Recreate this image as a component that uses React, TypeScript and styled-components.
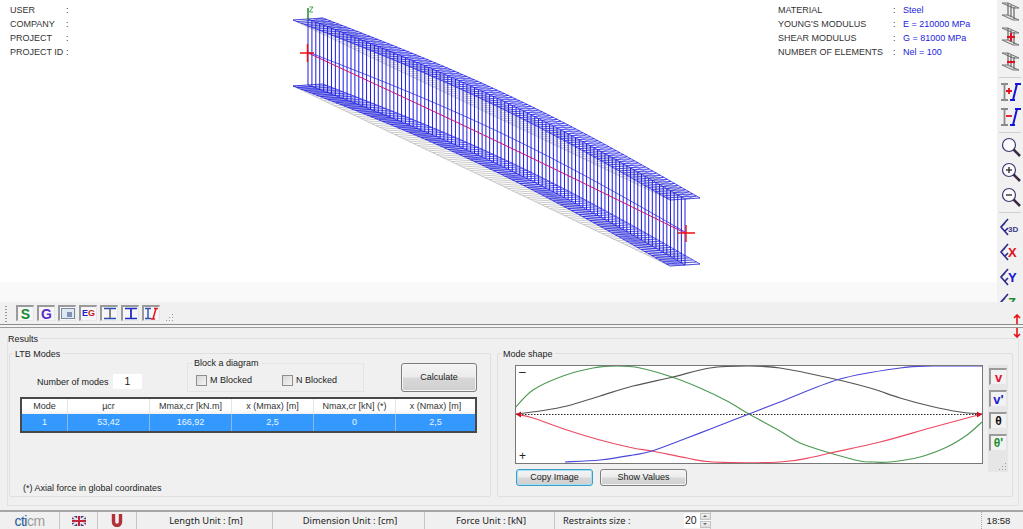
import React from 'react'
import styled, { createGlobalStyle } from 'styled-components'

const GlobalStyle = createGlobalStyle`
    html, body {
        margin: 0;
        padding: 0;
        background: #f0f0f0;
        overflow: hidden;
    }
`

const Page = styled.div`
    width: 1023px;
    height: 529px;
    display: flex;
    flex-direction: column;
    position: relative;
    overflow: hidden;
    font-family: "Liberation Sans", Arial, sans-serif;
    font-size: 9px;
    color: #222;
    background: #f0f0f0;
`

const ViewRow = styled.div`
    height: 302px;
    display: flex;
    flex-shrink: 0;
`

const Canvas = styled.div`
    flex: 1;
    position: relative;
    background: linear-gradient(#fff 0, #fff 282px, #f9f9f9 282px);
    display: flex;
    justify-content: space-between;
    padding: 3px 10px 0;
`

const BeamSvg = styled.svg`
    position: absolute;
    left: 0;
    top: 0;
`

const InfoGrid = styled.div<{ $cols: string }>`
    display: grid;
    grid-template-columns: ${({ $cols }) => $cols};
    grid-auto-rows: 14px;
    align-content: start;
    line-height: 14px;
    color: #333;
    white-space: nowrap;
`

const InfoRight = styled(InfoGrid)`
    margin-right: 10px;
    width: 199px;
`

const InfoValue = styled.span`
    color: #2222dd;
`

const SideBar = styled.div`
    width: 26px;
    height: 302px;
    overflow: hidden;
    display: flex;
    flex-direction: column;
    align-items: center;
    background: #f1f1f1;
    padding-top: 2px;
    box-sizing: border-box;
`

const SideIcon = styled.svg`
    flex-shrink: 0;
    margin-bottom: 5px;
    margin-left: 1px;
`

const SideSep = styled.div`
    width: 22px;
    height: 1px;
    background: #cfcfcf;
    flex-shrink: 0;
    margin: 0 0 4px;
`

const ToolRow = styled.div`
    height: 22px;
    flex-shrink: 0;
    display: flex;
    align-items: center;
    gap: 3px;
    padding-left: 16px;
    position: relative;
    background: #f0f0f0;
`

const Grip = styled.div`
    position: absolute;
    left: 5px;
    top: 4px;
    width: 2px;
    height: 16px;
    background: repeating-linear-gradient(#999 0 1px, transparent 1px 3px);
`

const Resize = styled.svg`
    align-self: flex-end;
    margin: 0 0 1px 3px;
`

const ToolButton = styled.div`
    width: 18px;
    height: 16px;
    box-sizing: border-box;
    background: #f6f6fa;
    border-top: 2px solid #9a9a9a;
    border-left: 2px solid #9a9a9a;
    border-right: 1px solid #e6e6e6;
    border-bottom: 1px solid #e6e6e6;
    display: flex;
    align-items: center;
    justify-content: center;
`

const Glyph = styled.span<{ $color: string; $size?: number }>`
    font-weight: bold;
    font-size: ${({ $size }) => $size ?? 14}px;
    line-height: 1;
    color: ${({ $color }) => $color};
`

const Splitter = styled.div`
    height: 4px;
    box-sizing: border-box;
    flex-shrink: 0;
    border-top: 1px solid #8c8c8c;
    border-bottom: 1px solid #9a9a9a;
    background: #f4f4f4;
`

const Arrow = styled.svg<{ $top: number }>`
    position: absolute;
    left: 1013px;
    top: ${({ $top }) => $top}px;
`

const Results = styled.div`
    flex: 1;
    padding: 10px 4px 0 7px;
`

const ResultsFrame = styled.div`
    height: 168px;
    box-sizing: border-box;
    border: 1px solid #e2e2e2;
    position: relative;
    display: flex;
    gap: 6px;
    padding: 14px 0 0 1px;
`

const ResultsLabel = styled.span`
    position: absolute;
    top: -6px;
    left: 0;
    line-height: 12px;
    background: #f0f0f0;
    padding-right: 2px;
`

const Group = styled.div<{ $w: number }>`
    width: ${({ $w }) => $w}px;
    height: 144px;
    box-sizing: border-box;
    border: 1px solid #dfdfdf;
    border-radius: 2px;
    position: relative;
`

const GroupTitle = styled.span`
    position: absolute;
    top: -6px;
    left: 3px;
    background: #f0f0f0;
    padding: 0 2px;
    line-height: 12px;
    white-space: nowrap;
`

const LtbBody = styled.div`
    padding: 9px 13px 0 10px;
    height: 100%;
    box-sizing: border-box;
    display: flex;
    flex-direction: column;
`

const LtbTop = styled.div`
    display: flex;
    align-items: flex-start;
    height: 29px;
`

const ModesField = styled.div`
    margin: 11px 0 0 17px;
    width: 150px;
    display: flex;
    align-items: center;
`

const ModesLabel = styled.span`
    width: 76px;
    white-space: nowrap;
`

const ModesInput = styled.div`
    width: 29px;
    height: 15px;
    background: #fff;
    text-align: center;
    line-height: 15px;
    font-size: 10.5px;
`

const BlockBox = styled.div`
    width: 177px;
    height: 29px;
    box-sizing: border-box;
    border: 1px solid #e4e4e4;
    position: relative;
    display: flex;
    align-items: center;
    padding: 5px 0 0 8px;
    margin-right: 37px;
    flex-shrink: 0;
`

const BlockTitle = styled.span`
    position: absolute;
    top: -7px;
    left: 4px;
    padding: 0 2px;
    line-height: 12px;
    background: #f0f0f0;
`

const CheckLabel = styled.label`
    display: flex;
    align-items: center;
    gap: 3px;
    width: 86px;
    flex-shrink: 0;
    white-space: nowrap;
`

const CheckMark = styled.span`
    width: 9px;
    height: 9px;
    flex-shrink: 0;
    border: 1px solid #8e8e8e;
    background: linear-gradient(135deg, #d8d8d8, #f4f4f4);
`

const ActionButton = styled.div<{ $w: number; $h: number; $active?: boolean }>`
    width: ${({ $w }) => $w}px;
    height: ${({ $h }) => $h}px;
    box-sizing: border-box;
    flex-shrink: 0;
    padding-bottom: 1px;
    border: 1px solid ${({ $active }) => ($active ? '#3c9fc8' : '#7d7d7d')};
    border-radius: 3px;
    background: linear-gradient(#f4f4f4 0, #ececec 48%, #d8d8d8 52%, #cfcfcf 100%);
    display: flex;
    align-items: center;
    justify-content: center;
    box-shadow: ${({ $active }) => ($active ? 'inset 0 0 0 1px #a8def2' : 'inset 0 0 0 1px #f5f5f5')};
`

const ModesTable = styled.div`
    margin-top: 5px;
    width: 457px;
    height: 36px;
    box-sizing: border-box;
    border: 2px solid #484848;
    background: #fff;
    display: flex;
    flex-direction: column;
`

const TableRow = styled.div<{ $head?: boolean }>`
    display: grid;
    grid-template-columns: 46px repeat(4, 82px) 1fr;
    height: ${({ $head }) => ($head ? 15 : 17)}px;
    line-height: ${({ $head }) => ($head ? 15 : 16)}px;
    background: ${({ $head }) => ($head ? 'linear-gradient(#fff 0, #fff 70%, #f0f0f0 100%)' : '#3399ff')};
    color: ${({ $head }) => ($head ? '#333' : '#eef6ff')};
    text-align: center;
`

const TableCell = styled.span<{ $head?: boolean }>`
    border-right: 1px solid ${({ $head }) => ($head ? '#e4e4e4' : '#8fb9e2')};
    white-space: nowrap;

    &:last-child {
        border-right: 0;
    }
`

const Footnote = styled.div`
    margin-top: auto;
    padding-left: 3px;
    margin-bottom: 2px;
    line-height: 12px;
`

const ShapeBody = styled.div`
    padding: 11px 0 0 17px;
`

const ShapeTop = styled.div`
    display: flex;
    align-items: flex-start;
    gap: 5px;
`

const Plot = styled.div`
    width: 468px;
    height: 99px;
    box-sizing: border-box;
    border: 1px solid #777;
    background: #fff;
    position: relative;
    flex-shrink: 0;
`

const PlotSign = styled.span<{ $bottom?: boolean }>`
    position: absolute;
    left: 3px;
    ${({ $bottom }) => ($bottom ? 'bottom: 0;' : 'top: -1px;')}
    font-size: 12px;
    line-height: 14px;
    color: #222;
`

const ModeBar = styled.div`
    width: 20px;
    height: 107px;
    background: #e6e6e6;
    display: flex;
    flex-direction: column;
    gap: 5px;
    padding-top: 3px;
    box-sizing: border-box;
    align-items: center;
    position: relative;
`

const ModeButton = styled(ToolButton)`
    height: 17px;
    background: #f2f2f2;
`

const ModeGrip = styled.svg`
    position: absolute;
    right: 1px;
    bottom: 1px;
`

const ShapeActions = styled.div`
    display: flex;
    gap: 7px;
    margin-top: -3px;
    padding-left: 1px;
    position: relative;
    width: 200px;
`

const StatusBar = styled.div`
    height: 17px;
    margin-top: auto;
    flex-shrink: 0;
    border-top: 2px solid #a6a6a6;
    display: grid;
    grid-template-columns: 60px 38px 39px 136px 152px 130px 156px 1fr 42px;
    background: #f0f0f0;
    font-family: "Noto Sans", "Liberation Sans", sans-serif;
    font-size: 9.3px;
    color: #222;
`

const StatusCell = styled.div<{ $flat?: boolean }>`
    border-right: ${({ $flat }) => ($flat ? '0' : '1px solid #c6c6c6')};
    display: flex;
    align-items: center;
    justify-content: center;
    white-space: nowrap;
    height: 17px;
`

const UnitCell = styled(StatusCell)`
    padding-left: 3px;
`

const RestraintCell = styled(StatusCell)`
    justify-content: flex-start;
    padding-left: 8px;
    position: relative;
`

const Spinner = styled.div`
    position: absolute;
    left: 129px;
    top: 1px;
    width: 27px;
    height: 15px;
    background: #fff;
    box-sizing: border-box;
    display: flex;
    line-height: 14px;
    font-family: "Liberation Sans", sans-serif;
    font-size: 10.5px;
    padding-left: 1px;
`

const SpinnerArrows = styled.div`
    margin-left: auto;
    width: 11px;
    display: flex;
    flex-direction: column;
    gap: 1px;
`

const SpinnerArrow = styled.div<{ $down?: boolean }>`
    flex: 1;
    background: linear-gradient(#f2f2f2, #dcdcdc);
    border: 1px solid #c4c4c4;
    position: relative;

    &::after {
        content: '';
        position: absolute;
        left: 2px;
        top: 1px;
        border-left: 2px solid transparent;
        border-right: 2px solid transparent;
        ${({ $down }) => ($down ? 'border-top: 2px solid #666;' : 'border-bottom: 2px solid #666;')}
    }
`

const Logo = styled.span`
    font-family: "Liberation Sans", sans-serif;
    font-size: 14px;
    letter-spacing: -0.5px;
    color: #25579c;
`

const LogoEnd = styled.span`
    color: #9a9a9a;
`

const ClockCell = styled(StatusCell)`
    border-left: 1px dotted #aaa;
    font-family: "Liberation Sans", sans-serif;
    font-size: 9.5px;
    border-right: 0;
    padding-right: 8px;
`

const leftInfo = ['USER', 'COMPANY', 'PROJECT', 'PROJECT ID']

const rightInfo = [
    ['MATERIAL', 'Steel'],
    ["YOUNG'S MODULUS", 'E = 210000 MPa'],
    ['SHEAR MODULUS', 'G = 81000 MPa'],
    ['NUMBER OF ELEMENTS', 'Nel = 100'],
]

const columns = ['Mode', 'µcr', 'Mmax,cr [kN.m]', 'x (Mmax) [m]', 'Nmax,cr [kN] (*)', 'x (Nmax) [m]']
const values = ['1', '53,42', '166,92', '2,5', '0', '2,5']

type Pt = [number, number]

// plot offset: curves below were read in page coords, inner plot starts at 516,366
const smooth = (pts: Pt[]) => {
    const p = pts.map(([x, y]): Pt => [x - 516, y - 366])
    let d = `M${p[0][0]} ${p[0][1]}`
    for (let i = 0; i < p.length - 1; i++) {
        const a = p[Math.max(i - 1, 0)]
        const b = p[i]
        const c = p[i + 1]
        const e = p[Math.min(i + 2, p.length - 1)]
        d += ` C${b[0] + (c[0] - a[0]) / 6} ${b[1] + (c[1] - a[1]) / 6} ${c[0] - (e[0] - b[0]) / 6} ${c[1] - (e[1] - b[1]) / 6} ${c[0]} ${c[1]}`
    }
    return d
}

const greenCurve: Pt[] = [[515, 408], [533, 390], [563, 376], [593, 368], [617, 366], [640, 368], [672, 377], [700, 388], [727, 401], [749, 414], [780, 431], [800, 443], [830, 453], [860, 461], [873, 462], [890, 462], [920, 457], [947, 447], [967, 435], [982, 422]]
const blackCurve: Pt[] = [[516, 414], [540, 411], [567, 406], [600, 396], [633, 386], [673, 377], [710, 368], [749, 366], [780, 368], [830, 378], [870, 388], [900, 398], [930, 406], [960, 412], [982, 414]]
const redCurve: Pt[] = [[516, 414], [533, 418], [567, 430], [600, 440], [633, 448], [652, 451], [687, 458], [713, 462], [780, 462], [813, 457], [830, 453], [880, 442], [930, 428], [967, 418], [982, 414]]
const blueCurve: Pt[] = [[565, 462], [600, 460], [633, 455], [652, 451], [687, 438], [713, 428], [749, 414], [780, 402], [840, 379], [900, 368], [933, 366], [982, 366]]

// straight beam axis from the left section to the right section
const segments = 100
const along = (i: number, bulge: number): Pt => {
    const t = i / segments
    const s = Math.sin(Math.PI * t) * bulge
    return [377 * t + s * 0.5, 180 * t - s]
}

const BeamDrawing = () => {
    const web: string[] = []
    const flange: string[] = []
    const hatch: string[] = []
    const grey: string[] = []
    const red: string[] = []

    const edge = (x: number, y: number, bulge: number, out: string[]) => {
        let d = ''
        for (let i = 0; i <= segments; i += 2) {
            const [dx, dy] = along(i, bulge)
            d += `${i === 0 ? 'M' : 'L'}${x + dx} ${y + dy}`
        }
        out.push(d)
    }

    for (let i = 0; i <= segments; i++) {
        const [dx, dy] = along(i, 9)
        web.push(`M${308 + dx} ${19 + dy}L${308 + dx} ${85 + dy}`)
        flange.push(`M${293 + dx} ${20 + dy}L${323 + dx} ${18 + dy}`)
        flange.push(`M${293 + dx} ${86 + dy}L${323 + dx} ${84 + dy}`)
        if (i < segments) {
            // flange hatching between this section and the next one
            const [nx, ny] = along(i + 1, 9)
            hatch.push(`M${323 + dx} ${18 + dy}L${308 + nx} ${19 + ny}`)
            hatch.push(`M${293 + dx} ${86 + dy}L${308 + nx} ${85 + ny}`)
        }
        const [gx, gy] = along(i, 0)
        grey.push(`M${293 + gx} ${20 + gy}L${323 + gx} ${18 + gy}`)
        grey.push(`M${293 + gx} ${86 + gy}L${323 + gx} ${84 + gy}`)
    }

    edge(293, 20, 9, flange)
    edge(323, 18, 9, flange)
    edge(293, 86, 9, flange)
    edge(323, 84, 9, flange)
    edge(308, 19, 9, flange)
    edge(308, 85, 9, flange)
    edge(308, 52, 9, flange)
    edge(293, 86, 0, grey)
    edge(293, 20, 0, grey)
    edge(308, 53, 1.5, red)

    return (
        <BeamSvg width="997" height="302" fill="none">
            <path d={grey.join('')} stroke="#bcbcbc" strokeWidth="0.8" />
            <path d={web.join('')} stroke="#1a1ae6" strokeWidth="1" />
            <path d={flange.join('')} stroke="#1a1ae6" strokeWidth="0.7" />
            <path d={hatch.join('')} stroke="#1a1ae6" strokeWidth="0.55" />
            <path d={red.join('')} stroke="#d0106a" strokeWidth="1" />
            <path d="M308 8V20" stroke="#1f8a2e" strokeWidth="1.5" />
            <path d="M309.5 7H313L309.5 12H313" stroke="#1f8a2e" strokeWidth="0.8" />
            <path d="M300 53H314M307.5 44V62" stroke="#f01010" strokeWidth="1.4" />
            <path d="M678 233H695M686 225V242" stroke="#f01010" strokeWidth="1.4" />
        </BeamSvg>
    )
}

const SideIcons = () => {
    const ibeam = (sign?: string) => (
        <>
            <path d="M1 1H7L18 6H12ZM1 13H7L18 18H12Z" stroke="#777" fill="#dcdcdc" strokeWidth="1" />
            <path d="M7 1V13M10 3V15M13 5V17" stroke="#666" strokeWidth="1.2" />
            {sign === '+' && <path d="M6 10H14M10 6V14" stroke="#e01020" strokeWidth="2.2" />}
            {sign === '-' && <path d="M6 10H14" stroke="#e01020" strokeWidth="2.2" />}
        </>
    )
    const flip = (sign: string) => (
        <>
            <path d="M1 2H8M1 18H8M4.5 2V18" stroke="#8a8a8a" strokeWidth="1.8" />
            <path d="M13 18L17 2M10 18H15M15 2H21" stroke="#1414d8" strokeWidth="2" />
            <path d={sign === '+' ? 'M6 9H12M9 6V12' : 'M6 9H12'} stroke="#e01020" strokeWidth="1.8" />
        </>
    )
    const lens = (sign?: string) => (
        <>
            <circle cx="8" cy="8" r="6.5" stroke="#3a3a70" strokeWidth="1.2" fill="#fbfbff" />
            <path d="M12.5 12.5L19 19" stroke="#3c2a44" strokeWidth="2.6" />
            {sign && <path d="M5 8H11" stroke="#333" strokeWidth="1.4" />}
            {sign === '+' && <path d="M8 5V11" stroke="#333" strokeWidth="1.4" />}
        </>
    )
    const view = (label: string, color: string, size: number) => (
        <>
            <path d="M9 2L2 10L9 18M2 10L6 6" stroke="#2a2a8a" strokeWidth="1.6" fill="none" />
            <path d="M6 14L9 11" stroke="#2a2a8a" strokeWidth="1.6" />
            <text x="9" y="15" fontSize={size} fontWeight="bold" fill={color} fontFamily="Liberation Sans">{label}</text>
        </>
    )
    return (
        <>
            <SideIcon width="20" height="20" viewBox="0 0 20 20">{ibeam()}</SideIcon>
            <SideIcon width="20" height="20" viewBox="0 0 20 20">{ibeam('+')}</SideIcon>
            <SideIcon width="20" height="20" viewBox="0 0 20 20">{ibeam('-')}</SideIcon>
            <SideSep />
            <SideIcon width="22" height="20" viewBox="0 0 22 20">{flip('+')}</SideIcon>
            <SideIcon width="22" height="20" viewBox="0 0 22 20">{flip('-')}</SideIcon>
            <SideSep />
            <SideIcon width="20" height="20" viewBox="0 0 20 20">{lens()}</SideIcon>
            <SideIcon width="20" height="20" viewBox="0 0 20 20">{lens('+')}</SideIcon>
            <SideIcon width="20" height="20" viewBox="0 0 20 20">{lens('-')}</SideIcon>
            <SideSep />
            <SideIcon width="24" height="20" viewBox="0 0 24 20">{view('3D', '#3a3a8a', 8)}</SideIcon>
            <SideIcon width="24" height="20" viewBox="0 0 24 20">{view('X', '#e01020', 13)}</SideIcon>
            <SideIcon width="24" height="20" viewBox="0 0 24 20">{view('Y', '#1414d8', 13)}</SideIcon>
            <SideIcon width="24" height="20" viewBox="0 0 24 20">{view('Z', '#1f8a2e', 13)}</SideIcon>
        </>
    )
}

const GripDots = () => (
    <>
        <rect x="6" y="0" width="1" height="1" />
        <rect x="3" y="3" width="1" height="1" />
        <rect x="6" y="3" width="1" height="1" />
        <rect x="0" y="6" width="1" height="1" />
        <rect x="3" y="6" width="1" height="1" />
        <rect x="6" y="6" width="1" height="1" />
    </>
)

const SectionGlyph = ({ color, flange }: { color: string; flange: string }) => (
    <svg width="14" height="13" fill="none">
        <path d="M1 1.5H13M1 11.5H13" stroke={flange} strokeWidth="1.5" />
        <path d="M7 2V11" stroke={color} strokeWidth="1.8" />
    </svg>
)

const App = () => {
    return (
        <Page>
            <GlobalStyle />
            <ViewRow>
                <Canvas>
                    <BeamDrawing />
                    <InfoGrid $cols="56px 10px">
                        {leftInfo.map((label) => (
                            <React.Fragment key={label}>
                                <span>{label}</span>
                                <span>:</span>
                            </React.Fragment>
                        ))}
                    </InfoGrid>
                    <InfoRight $cols="115px 10px 1fr">
                        {rightInfo.map(([label, value]) => (
                            <React.Fragment key={label}>
                                <span>{label}</span>
                                <span>:</span>
                                <InfoValue>{value}</InfoValue>
                            </React.Fragment>
                        ))}
                    </InfoRight>
                </Canvas>
                <SideBar>
                    <SideIcons />
                </SideBar>
            </ViewRow>

            <ToolRow>
                <Grip />
                <ToolButton><Glyph $color="#178a2a">S</Glyph></ToolButton>
                <ToolButton><Glyph $color="#5a2ec8">G</Glyph></ToolButton>
                <ToolButton>
                    <svg width="14" height="11">
                        <rect x="0.5" y="0.5" width="13" height="10" fill="#dfe8f2" stroke="#7a8aa0" />
                        <rect x="6" y="4" width="5" height="5" fill="#7f93b2" />
                    </svg>
                </ToolButton>
                <ToolButton><Glyph $color="#2222c8" $size={9}>E</Glyph><Glyph $color="#d01818" $size={9}>G</Glyph></ToolButton>
                <ToolButton><SectionGlyph color="#777" flange="#2a4fb0" /></ToolButton>
                <ToolButton><SectionGlyph color="#1c2fc0" flange="#1c2fc0" /></ToolButton>
                <ToolButton>
                    <svg width="15" height="13" fill="none">
                        <path d="M1 1.5H7M1 11.5H7M4 2V11" stroke="#2a4fb0" strokeWidth="1.4" />
                        <path d="M9 12L12 1.5M7 12H11M10 1.5H14" stroke="#e01818" strokeWidth="1.5" />
                    </svg>
                </ToolButton>
                <Resize width="8" height="9" fill="#9a9a9a"><GripDots /></Resize>
            </ToolRow>

            <Splitter />

            <Arrow $top={314} width="8" height="10" fill="none" stroke="#e81010" strokeWidth="1.6">
                <path d="M4 10V1M1 4L4 1L7 4" />
            </Arrow>
            <Arrow $top={328} width="8" height="10" fill="none" stroke="#e81010" strokeWidth="1.6">
                <path d="M4 0V9M1 6L4 9L7 6" />
            </Arrow>

            <Results>
                <ResultsFrame>
                    <ResultsLabel>Results</ResultsLabel>
                    <Group $w={482}>
                        <GroupTitle>LTB Modes</GroupTitle>
                        <LtbBody>
                            <LtbTop>
                                <ModesField>
                                    <ModesLabel>Number of modes</ModesLabel>
                                    <ModesInput>1</ModesInput>
                                </ModesField>
                                <BlockBox>
                                    <BlockTitle>Block a diagram</BlockTitle>
                                    <CheckLabel><CheckMark />M Blocked</CheckLabel>
                                    <CheckLabel><CheckMark />N Blocked</CheckLabel>
                                </BlockBox>
                                <ActionButton $w={76} $h={29}>Calculate</ActionButton>
                            </LtbTop>
                            <ModesTable>
                                <TableRow $head>
                                    {columns.map((c) => <TableCell key={c} $head>{c}</TableCell>)}
                                </TableRow>
                                <TableRow>
                                    {values.map((v, i) => <TableCell key={columns[i]}>{v}</TableCell>)}
                                </TableRow>
                            </ModesTable>
                            <Footnote>(*) Axial force in global coordinates</Footnote>
                        </LtbBody>
                    </Group>
                    <Group $w={516}>
                        <GroupTitle>Mode shape</GroupTitle>
                        <ShapeBody>
                            <ShapeTop>
                                <Plot>
                                    <PlotSign>–</PlotSign>
                                    <PlotSign $bottom>+</PlotSign>
                                    <svg width="466" height="97" fill="none" strokeWidth="1.2">
                                        <path d="M0 48.5H466" stroke="#222" strokeWidth="1" strokeDasharray="1.5 1.5" />
                                        <path d={smooth(greenCurve)} stroke="#4f9a55" />
                                        <path d={smooth(blackCurve)} stroke="#555" />
                                        <path d={smooth(redCurve)} stroke="#ee4a63" />
                                        <path d={smooth(blueCurve)} stroke="#4a48d8" />
                                        <path d="M0 48.5L5 45.5V51.5ZM466 48.5L461 45.5V51.5Z" fill="#d01020" />
                                    </svg>
                                </Plot>
                                <ModeBar>
                                    <ModeButton><Glyph $color="#e01030" $size={13}>v</Glyph></ModeButton>
                                    <ModeButton><Glyph $color="#1c1cc8" $size={13}>v'</Glyph></ModeButton>
                                    <ModeButton><Glyph $color="#111" $size={12}>θ</Glyph></ModeButton>
                                    <ModeButton><Glyph $color="#179030" $size={12}>θ'</Glyph></ModeButton>
                                    <ModeGrip width="8" height="8" fill="#9a9a9a"><GripDots /></ModeGrip>
                                </ModeBar>
                            </ShapeTop>
                            <ShapeActions>
                                <ActionButton $w={77} $h={17} $active>Copy Image</ActionButton>
                                <ActionButton $w={87} $h={17}>Show Values</ActionButton>
                            </ShapeActions>
                        </ShapeBody>
                    </Group>
                </ResultsFrame>
            </Results>

            <StatusBar>
                <StatusCell><Logo>cti<LogoEnd>cm</LogoEnd></Logo></StatusCell>
                <StatusCell>
                    <svg width="14" height="10">
                        <rect width="14" height="10" fill="#3a3f86" />
                        <path d="M0 0L14 10M14 0L0 10" stroke="#f3dede" strokeWidth="2" />
                        <path d="M7 0V10M0 5H14" stroke="#f3f3f3" strokeWidth="3.5" />
                        <path d="M7 0V10M0 5H14" stroke="#c2223a" strokeWidth="2" />
                    </svg>
                </StatusCell>
                <StatusCell>
                    <svg width="12" height="13" fill="none">
                        <path d="M2.5 0V8A3.5 3.5 0 0 0 9.5 8V0" stroke="#b23038" strokeWidth="3.4" />
                    </svg>
                </StatusCell>
                <UnitCell>Length Unit : [m]</UnitCell>
                <UnitCell>Dimension Unit : [cm]</UnitCell>
                <UnitCell>Force Unit : [kN]</UnitCell>
                <RestraintCell>
                    Restraints size :
                    <Spinner>
                        20
                        <SpinnerArrows><SpinnerArrow /><SpinnerArrow $down /></SpinnerArrows>
                    </Spinner>
                </RestraintCell>
                <StatusCell $flat />
                <ClockCell>18:58</ClockCell>
            </StatusBar>
        </Page>
    )
}

export default App
